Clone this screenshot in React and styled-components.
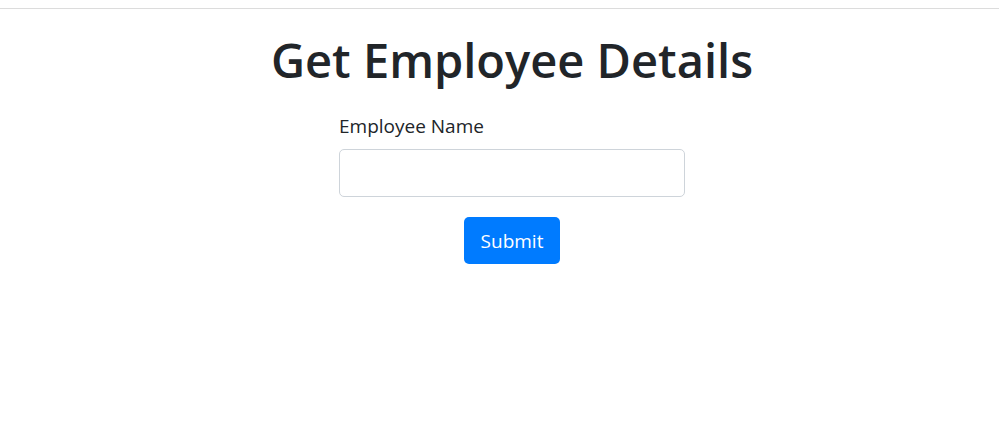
import styled, { createGlobalStyle } from "styled-components";

const GlobalStyle = createGlobalStyle`
  body {
    margin: 0;
    background: #fff;
    font-family: "Open Sans", "Liberation Sans", sans-serif;
    color: #212529;
  }
`;

const TopBar = styled.div`
  height: 8px;
  border-bottom: 1px solid #dcdcdc;
`;

const Page = styled.div`
  display: flex;
  flex-direction: column;
  align-items: center;
  padding-left: 25px;
`;

const Title = styled.h1`
  margin: 23px 0 0;
  font-size: 47px;
  font-weight: 600;
  line-height: 1.2;
`;

const Form = styled.form`
  width: 346px;
  display: flex;
  flex-direction: column;
  margin-top: 23px;
`;

const Label = styled.label`
  font-size: 19px;
  line-height: 30px;
  margin-bottom: 8px;
`;

const Input = styled.input`
  height: 48px;
  box-sizing: border-box;
  border: 1px solid #ced4da;
  border-radius: 5px;
  padding: 0 15px;
  font-size: 20px;
  font-family: inherit;
  outline: none;
`;

const Button = styled.button`
  align-self: center;
  margin-top: 20px;
  height: 47px;
  padding: 0 17px;
  border: none;
  border-radius: 5px;
  background: #007bff;
  color: #fff;
  font-family: inherit;
  font-size: 19px;
  cursor: pointer;
`;

const App = () => {
  return (
    <>
      <GlobalStyle />
      <TopBar />
      <Page>
        <Title>Get Employee Details</Title>
        <Form onSubmit={(e) => e.preventDefault()}>
          <Label>Employee Name</Label>
          <Input type="text" />
          <Button type="submit">Submit</Button>
        </Form>
      </Page>
    </>
  );
};

export default App;
